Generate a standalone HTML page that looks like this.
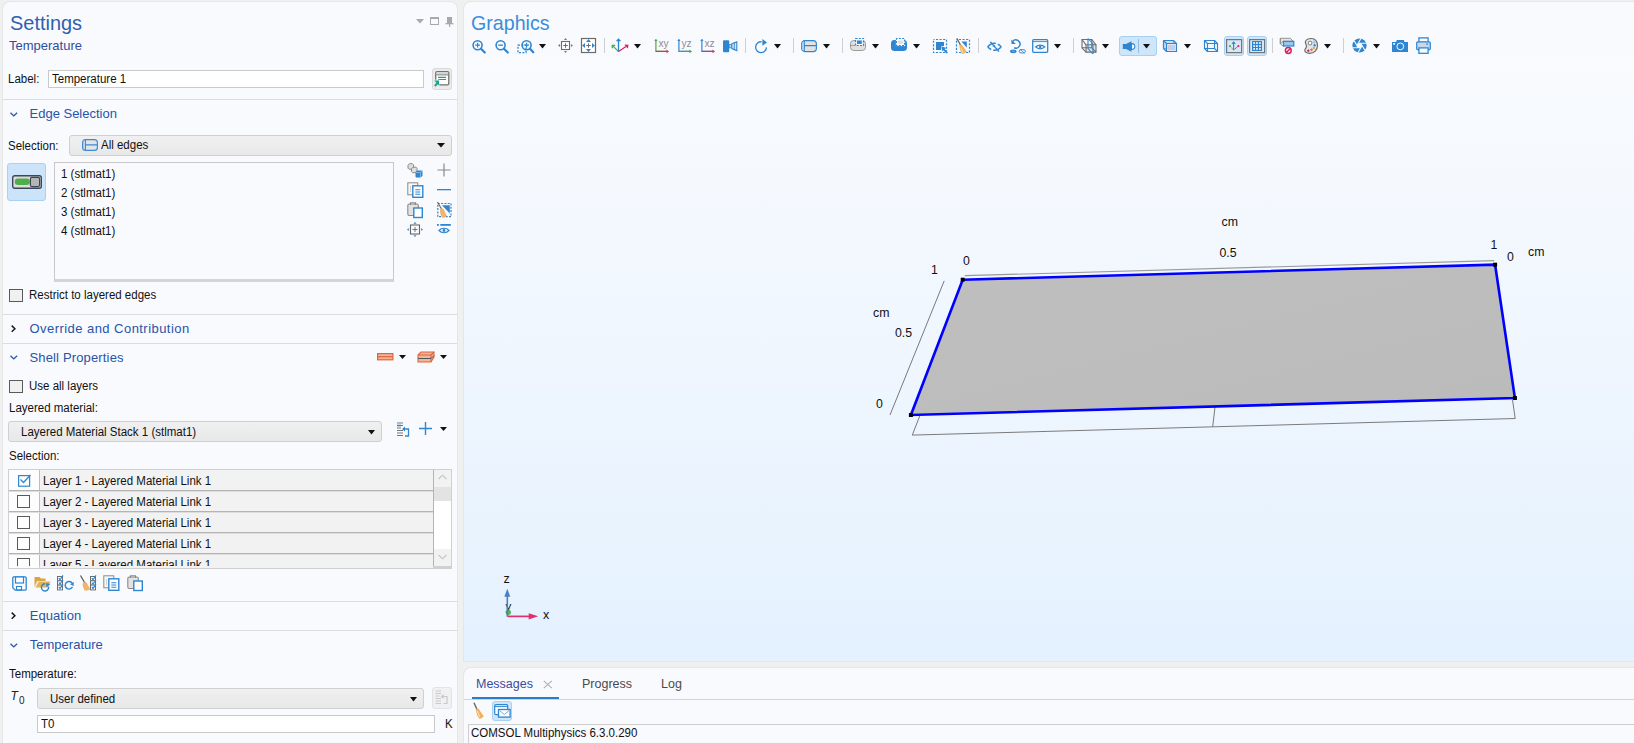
<!DOCTYPE html>
<html><head><meta charset="utf-8"><style>
*{margin:0;padding:0;box-sizing:border-box}
html,body{width:1634px;height:743px;overflow:hidden;background:#f0f0f0;font-family:"Liberation Sans",sans-serif;font-size:11.5px;color:#111;position:relative}
.a{position:absolute}
.t{position:absolute;white-space:nowrap;line-height:1}
svg.a{overflow:visible}
</style></head><body>
<div class="a" style="left:3px;top:2px;width:454px;height:760px;background:#f9fafe;border-radius:7px 7px 0 0;box-shadow:0 0 0 1px #e6e6e6"></div>
<div class="t" style="left:10.30px;top:12.12px;font-size:21px;color:#3160ae;transform:scaleX(0.95);transform-origin:0 0">Settings</div>
<div class="t" style="left:9.00px;top:38.90px;font-size:13px;color:#2d4f9c;">Temperature</div>
<svg class="a" style="left:416.2px;top:19px;" width="8" height="4.5" viewBox="0 0 8 4.5"><path d="M0 0H8L4.0 4.5Z" fill="#a9a9a9"/></svg>
<div class="a" style="left:430px;top:17px;width:9px;height:8px;border:1px solid #a9a9a9;border-top-width:2px"></div>
<svg class="a" style="left:445px;top:17px;" width="9" height="10" viewBox="0 0 9 10"><rect x="2" y="0" width="5" height="6" fill="#a9a9a9"/><rect x="0.5" y="6" width="8" height="1.3" fill="#a9a9a9"/><rect x="4" y="7" width="1.2" height="3" fill="#a9a9a9"/></svg>
<div class="t" style="left:8.00px;top:73.12px;font-size:12.5px;transform:scaleX(0.92);transform-origin:0 0;">Label:</div>
<div class="a" style="left:48px;top:70px;width:376px;height:18px;background:#fff;border:1px solid #cacaca"></div>
<div class="t" style="left:52.00px;top:73.12px;font-size:12.5px;transform:scaleX(0.92);transform-origin:0 0;">Temperature 1</div>
<div class="a" style="left:432px;top:68px;width:20px;height:22px;background:#ebebeb;border:1px solid #d9d9d9;border-radius:3px"></div>
<svg class="a" style="left:434px;top:70px;" width="16" height="17" viewBox="0 0 16 17"><rect x="1.7" y="1.7" width="13.1" height="13.1" rx="1.4" fill="#fff" stroke="#727272" stroke-width="1.3"/><rect x="2.4" y="2.4" width="11.7" height="2.2" fill="#d2d2d2"/><path d="M2.2 4.9H14.3" stroke="#727272" stroke-width="0.9"/><path d="M4 7.4H12M4 9.5H12" stroke="#1aa58a" stroke-width="1.1"/><rect x="-0.5" y="9.6" width="5.8" height="6.6" fill="#ececec"/><path d="M0.2 10.6H5V15.4Z" fill="#1aa58a"/><path d="M0.8 16L3.6 13" stroke="#1aa58a" stroke-width="2"/></svg>
<div class="a" style="left:3px;top:99px;width:454px;height:1px;background:#dcdcdc"></div>
<svg class="a" style="left:9.5px;top:112px;" width="8" height="5" viewBox="0 0 8 5"><path d="M0.5 0.7L3.8 3.9L7.1 0.7" fill="none" stroke="#2654a8" stroke-width="1.3"/></svg>
<div class="t" style="left:29.50px;top:106.90px;font-size:13px;color:#2654a8;">Edge Selection</div>
<div class="t" style="left:8.00px;top:139.52px;font-size:12.5px;transform:scaleX(0.92);transform-origin:0 0;">Selection:</div>
<div class="a" style="left:69px;top:135px;width:383px;height:21px;background:linear-gradient(#f0f0f0,#e8e8e8);border:1px solid #d0d0d0;border-radius:3px"></div>
<svg class="a" style="left:82px;top:139px;" width="16" height="12" viewBox="0 0 16 12"><rect x="0.6" y="0.6" width="14.8" height="10.8" rx="3" fill="#e4e4e4" stroke="#3a8ad6" stroke-width="1.15"/><path d="M1.8 1.5Q1.2 6 1.8 10.5" stroke="#9cc4ea" stroke-width="0.8" fill="none"/><path d="M3.4 1V11.2M3.4 5.9H15.2" stroke="#3a8ad6" stroke-width="1.1"/></svg>
<div class="t" style="left:101.00px;top:138.82px;font-size:12.5px;transform:scaleX(0.92);transform-origin:0 0;">All edges</div>
<svg class="a" style="left:437.0px;top:143px;" width="8" height="4.5" viewBox="0 0 8 4.5"><path d="M0 0H8L4.0 4.5Z" fill="#111"/></svg>
<div class="a" style="left:7px;top:163px;width:39px;height:38px;background:#cce4fa;border:1px solid #a9d1f5;border-radius:3px"></div>
<svg class="a" style="left:12px;top:175px;" width="30" height="14" viewBox="0 0 30 14"><rect x="0.7" y="0.7" width="28.6" height="12.6" rx="2" fill="#dcdcdc" stroke="#3b4756" stroke-width="1.4"/><rect x="2.8" y="3.6" width="15" height="6.4" rx="3.2" fill="#4fae4a"/><rect x="18.4" y="2.4" width="9.2" height="9.2" rx="1.5" fill="#b5b5b5" stroke="#3b4756" stroke-width="1.2"/></svg>
<div class="a" style="left:54px;top:162px;width:340px;height:120px;background:#f9fafe;border:1px solid #c8c8c8;border-bottom:3px solid #d5d5d7"></div>
<div class="t" style="left:61.30px;top:167.82px;font-size:12.5px;transform:scaleX(0.92);transform-origin:0 0;">1 (stlmat1)</div>
<div class="t" style="left:61.30px;top:186.82px;font-size:12.5px;transform:scaleX(0.92);transform-origin:0 0;">2 (stlmat1)</div>
<div class="t" style="left:61.30px;top:205.82px;font-size:12.5px;transform:scaleX(0.92);transform-origin:0 0;">3 (stlmat1)</div>
<div class="t" style="left:61.30px;top:224.82px;font-size:12.5px;transform:scaleX(0.92);transform-origin:0 0;">4 (stlmat1)</div>
<svg class="a" style="left:407px;top:163px;" width="16" height="15" viewBox="0 0 16 15"><g fill="#dedede" stroke="#8a8a8a" stroke-width="1"><path d="M1 2.2L2.5 0.7H5.5L6.5 1.7V4.7L5 6.2H2L1 5.2Z"/><path d="M4.5 5.7L6 4.2H9L10 5.2V8.2L8.5 9.7H5.5L4.5 8.7Z"/></g><path d="M8.5 9L10.5 7.5H15L15.5 8.5V13L13.5 14.5H9L8.5 13.5Z" fill="#2e86d2"/><path d="M9 9.5H13.5V14M13.5 9.5L15.5 7.5" fill="none" stroke="#8fc0ea" stroke-width="0.8"/></svg>
<svg class="a" style="left:437px;top:163px;" width="14" height="14" viewBox="0 0 14 14"><path d="M7 0.5V13.5M0.5 7H13.5" stroke="#8a8a8a" stroke-width="1.2"/></svg>
<svg class="a" style="left:406.5px;top:182px;" width="17" height="16" viewBox="0 0 17 16"><rect x="0.8" y="0.8" width="10" height="12" fill="#f7f7f7" stroke="#8a8a8a" stroke-width="1"/><path d="M3 5H4M3 7H4M3 9H4" stroke="#999" stroke-width="0.8"/><rect x="5.8" y="3.8" width="10" height="11.5" fill="#fff" stroke="#2e86d2" stroke-width="1.4"/><path d="M8.3 7.8H13.3M8.3 10H13.3M8.3 12.2H13.3" stroke="#2e86d2" stroke-width="1.1"/></svg>
<svg class="a" style="left:437px;top:189px;" width="14" height="2" viewBox="0 0 14 2"><rect x="0" y="0" width="14" height="1.3" fill="#2e86d2"/></svg>
<svg class="a" style="left:407px;top:202px;" width="16" height="16" viewBox="0 0 16 16"><rect x="0.8" y="2" width="10.5" height="11.5" rx="1.5" fill="#e2e2e2" stroke="#8a8a8a" stroke-width="1.1"/><path d="M3.5 3V0.8H8.5V3" fill="none" stroke="#8a8a8a" stroke-width="1.1"/><rect x="6.8" y="6" width="8.5" height="9.5" fill="#fff" stroke="#2e86d2" stroke-width="1.4"/></svg>
<svg class="a" style="left:437px;top:202px;" width="15" height="16" viewBox="0 0 15 16"><rect x="0.8" y="1.5" width="13.2" height="13.2" fill="none" stroke="#2e86d2" stroke-width="1.2" stroke-dasharray="2 1.3"/><path d="M5 3.2H12.8V11.5Z" fill="#2e86d2"/><path d="M0.5 0L4.5 7" stroke="#666" stroke-width="1.1"/><path d="M2.8 7.5Q5 5.8 6.5 7L10 14Q7 15.8 5 15.5Q2.8 11.5 2.8 7.5Z" fill="#f2b46a"/></svg>
<svg class="a" style="left:407px;top:222px;" width="16" height="15" viewBox="0 0 16 15"><rect x="3.5" y="3" width="9" height="9" fill="none" stroke="#666" stroke-width="1.1"/><path d="M8 5V10M5.5 7.5H10.5" stroke="#666" stroke-width="0.9"/><path d="M8 0L9.6 1.8H6.4Z M8 15L9.6 13.2H6.4Z M0 7.5L1.8 5.9V9.1Z M16 7.5L14.2 5.9V9.1Z" fill="#2e86d2"/></svg>
<svg class="a" style="left:437px;top:223px;" width="14" height="11" viewBox="0 0 14 11"><rect x="0" y="1" width="1.8" height="1.8" fill="#2e86d2"/><rect x="3.3" y="1" width="10.5" height="1.8" fill="#2e86d2"/><path d="M2 7.5C4.5 4.5 9.5 4.5 12 7.5C9.5 10.5 4.5 10.5 2 7.5Z" fill="none" stroke="#2e86d2" stroke-width="1.2"/><circle cx="7" cy="7.5" r="1.4" fill="#2e86d2"/></svg>
<div class="a" style="left:9px;top:289px;width:14px;height:13px;background:#f0f0f0;border:1px solid #5a5a5a"></div>
<div class="t" style="left:28.50px;top:289.02px;font-size:12.5px;transform:scaleX(0.92);transform-origin:0 0;">Restrict to layered edges</div>
<div class="a" style="left:3px;top:314px;width:454px;height:1px;background:#dcdcdc"></div>
<svg class="a" style="left:10.5px;top:325px;" width="5" height="8" viewBox="0 0 5 8"><path d="M0.7 0.6L3.9 3.7L0.7 6.8" fill="none" stroke="#1a1a1a" stroke-width="1.5"/></svg>
<div class="t" style="left:29.50px;top:322.00px;font-size:13px;color:#2654a8;letter-spacing:0.45px">Override and Contribution</div>
<div class="a" style="left:3px;top:343px;width:454px;height:1px;background:#dcdcdc"></div>
<svg class="a" style="left:9.5px;top:355px;" width="8" height="5" viewBox="0 0 8 5"><path d="M0.5 0.7L3.8 3.9L7.1 0.7" fill="none" stroke="#2654a8" stroke-width="1.3"/></svg>
<div class="t" style="left:29.50px;top:350.90px;font-size:13px;color:#2654a8;letter-spacing:0.15px">Shell Properties</div>
<svg class="a" style="left:377px;top:353px;" width="17" height="8" viewBox="0 0 17 8"><rect x="0.6" y="0.6" width="15.3" height="6.2" fill="#f0b59a" stroke="#e0643a" stroke-width="1.2"/><path d="M0.6 3.7H15.9" stroke="#e0643a" stroke-width="1.2"/></svg>
<svg class="a" style="left:399.1px;top:355px;" width="7" height="4" viewBox="0 0 7 4"><path d="M0 0H7L3.5 4Z" fill="#111"/></svg>
<svg class="a" style="left:417px;top:351px;" width="18" height="12" viewBox="0 0 18 12"><path d="M1 4L4 1H17V6L14 11H1Z" fill="#f0b59a" stroke="#e0643a" stroke-width="1.1"/><path d="M1 4H14V11M14 4L17 1" fill="none" stroke="#e0643a" stroke-width="1.1"/><path d="M1 7.5H14L17 4.5" fill="none" stroke="#555" stroke-width="1"/></svg>
<svg class="a" style="left:440.0px;top:355px;" width="7" height="4" viewBox="0 0 7 4"><path d="M0 0H7L3.5 4Z" fill="#111"/></svg>
<div class="a" style="left:9px;top:380px;width:14px;height:13px;background:#f0f0f0;border:1px solid #5a5a5a"></div>
<div class="t" style="left:28.50px;top:379.92px;font-size:12.5px;transform:scaleX(0.92);transform-origin:0 0;">Use all layers</div>
<div class="t" style="left:8.50px;top:402.02px;font-size:12.5px;transform:scaleX(0.92);transform-origin:0 0;">Layered material:</div>
<div class="a" style="left:8px;top:421px;width:374px;height:21px;background:linear-gradient(#f0f0f0,#e8e8e8);border:1px solid #d0d0d0;border-radius:3px"></div>
<div class="t" style="left:21.20px;top:425.62px;font-size:12.5px;transform:scaleX(0.92);transform-origin:0 0;">Layered Material Stack 1 (stlmat1)</div>
<svg class="a" style="left:367.9px;top:429.6px;" width="7" height="4.5" viewBox="0 0 7 4.5"><path d="M0 0H7L3.5 4.5Z" fill="#111"/></svg>
<svg class="a" style="left:397px;top:422px;" width="13" height="15" viewBox="0 0 13 15"><path d="M0 1H6M0 3.5H6M0 6H4M0 8.5H6M0 11H6M0 13.5H6" stroke="#777" stroke-width="1"/><path d="M0 3.5H4" stroke="#2f86d3" stroke-width="1.6"/><path d="M7 7H11.5V14H8" fill="none" stroke="#2f86d3" stroke-width="1.3"/><path d="M5 7L8 4.5V9.5Z" fill="#2f86d3"/></svg>
<svg class="a" style="left:419px;top:422px;" width="13" height="13" viewBox="0 0 13 13"><path d="M6.5 0V13M0 6.5H13" stroke="#2f86d3" stroke-width="1.4"/></svg>
<svg class="a" style="left:440.0px;top:427px;" width="7" height="4" viewBox="0 0 7 4"><path d="M0 0H7L3.5 4Z" fill="#111"/></svg>
<div class="t" style="left:8.50px;top:449.62px;font-size:12.5px;transform:scaleX(0.92);transform-origin:0 0;">Selection:</div>
<div class="a" style="left:8px;top:469px;width:444px;height:100px;background:#f9fafe;border:1px solid #d0d0d0;border-bottom:3px solid #d0d0d0"></div>
<div class="a" style="left:9px;top:470px;width:30px;height:21px;background:#fdfdfd"></div>
<div class="a" style="left:40px;top:470px;width:393px;height:21px;background:#f2f2f2"></div>
<div class="a" style="left:9px;top:491px;width:30px;height:21px;background:#fdfdfd"></div>
<div class="a" style="left:40px;top:491px;width:393px;height:21px;background:#f2f2f2"></div>
<div class="a" style="left:9px;top:512px;width:30px;height:21px;background:#fdfdfd"></div>
<div class="a" style="left:40px;top:512px;width:393px;height:21px;background:#f2f2f2"></div>
<div class="a" style="left:9px;top:533px;width:30px;height:21px;background:#fdfdfd"></div>
<div class="a" style="left:40px;top:533px;width:393px;height:21px;background:#f2f2f2"></div>
<div class="a" style="left:9px;top:554px;width:30px;height:14px;background:#fdfdfd"></div>
<div class="a" style="left:40px;top:554px;width:393px;height:14px;background:#f2f2f2"></div>
<div class="a" style="left:39px;top:470px;width:1px;height:96px;background:#bdbdbd"></div>
<div class="a" style="left:433px;top:470px;width:1px;height:96px;background:#b4b4b4"></div>
<div class="a" style="left:9px;top:490px;width:424px;height:1px;background:#b4b4b4"></div>
<div class="a" style="left:9px;top:491px;width:424px;height:1px;background:#dedede"></div>
<div class="a" style="left:9px;top:511px;width:424px;height:1px;background:#b4b4b4"></div>
<div class="a" style="left:9px;top:512px;width:424px;height:1px;background:#dedede"></div>
<div class="a" style="left:9px;top:532px;width:424px;height:1px;background:#b4b4b4"></div>
<div class="a" style="left:9px;top:533px;width:424px;height:1px;background:#dedede"></div>
<div class="a" style="left:9px;top:553px;width:424px;height:1px;background:#b4b4b4"></div>
<div class="a" style="left:9px;top:554px;width:424px;height:1px;background:#dedede"></div>
<div class="a" style="left:9px;top:470px;width:424px;height:96px;overflow:hidden">
<div class="t" style="left:34.3px;top:4.62px;font-size:12.5px;transform:scaleX(0.92);transform-origin:0 0">Layer 1 - Layered Material Link 1</div>
<div class="t" style="left:34.3px;top:25.62px;font-size:12.5px;transform:scaleX(0.92);transform-origin:0 0">Layer 2 - Layered Material Link 1</div>
<div class="t" style="left:34.3px;top:46.62px;font-size:12.5px;transform:scaleX(0.92);transform-origin:0 0">Layer 3 - Layered Material Link 1</div>
<div class="t" style="left:34.3px;top:67.62px;font-size:12.5px;transform:scaleX(0.92);transform-origin:0 0">Layer 4 - Layered Material Link 1</div>
<div class="t" style="left:34.3px;top:88.62px;font-size:12.5px;transform:scaleX(0.92);transform-origin:0 0">Layer 5 - Layered Material Link 1</div>
<svg class="a" style="left:7.5px;top:4px" width="15" height="13" viewBox="0 0 15 13"><rect x="1.6" y="1.6" width="11" height="10.6" fill="none" stroke="#2f86d3" stroke-width="1.2"/><path d="M3.5 5.5L6.5 8.5L13.5 1" fill="none" stroke="#2f86d3" stroke-width="1.3"/></svg>
<div class="a" style="left:8px;top:24.5px;width:13px;height:13px;border:1px solid #5a5a5a;background:#fdfdfd"></div>
<div class="a" style="left:8px;top:45.5px;width:13px;height:13px;border:1px solid #5a5a5a;background:#fdfdfd"></div>
<div class="a" style="left:8px;top:66.5px;width:13px;height:13px;border:1px solid #5a5a5a;background:#fdfdfd"></div>
<div class="a" style="left:8px;top:87.5px;width:13px;height:13px;border:1px solid #5a5a5a;background:#fdfdfd"></div>
</div>
<div class="a" style="left:434px;top:470px;width:17px;height:17px;background:#f2f2f2"></div>
<div class="a" style="left:434px;top:487px;width:17px;height:14px;background:#e3e3e3"></div>
<div class="a" style="left:434px;top:501px;width:17px;height:48px;background:#ffffff"></div>
<div class="a" style="left:434px;top:549px;width:17px;height:17px;background:#f2f2f2"></div>
<svg class="a" style="left:438px;top:474px;" width="9" height="6" viewBox="0 0 9 6"><path d="M0.6 5L4.5 1.2L8.4 5" fill="none" stroke="#c4c4c4" stroke-width="1.1"/></svg>
<svg class="a" style="left:438px;top:554px;" width="9" height="6" viewBox="0 0 9 6"><path d="M0.6 1L4.5 4.8L8.4 1" fill="none" stroke="#c4c4c4" stroke-width="1.1"/></svg>
<svg class="a" style="left:11.5px;top:575.5px;" width="15" height="15" viewBox="0 0 15 15"><path d="M1 0.8H13.2Q14.2 0.8 14.2 1.8V13.2Q14.2 14.2 13.2 14.2H3.2L0.8 11.8V1.8Q0.8 0.8 1.8 0.8Z" fill="none" stroke="#2e86d2" stroke-width="1.3"/><rect x="3.5" y="1" width="8" height="6" fill="#fff" stroke="#2e86d2" stroke-width="1.2"/><rect x="4.5" y="10.5" width="5" height="3.5" fill="none" stroke="#2e86d2" stroke-width="1.1"/></svg>
<svg class="a" style="left:33.5px;top:575.5px;" width="17" height="16" viewBox="0 0 17 16"><path d="M0.5 1H5.5L7 2.5H11.5V5H3L0.5 11Z" fill="#d9a545"/><path d="M0.5 11.5L3.5 5.5H16.5L13.5 11.5Z" fill="#e1b457"/><path d="M1 11.5L4 6" stroke="#fff" stroke-width="0.8"/><path d="M14.5 10.5A3.6 3.6 0 1 1 11 7.8" fill="none" stroke="#2e86d2" stroke-width="1.4"/><path d="M16.5 8L12.5 11.2L12.2 7Z" fill="#2e86d2"/></svg>
<svg class="a" style="left:56.5px;top:575px;" width="17" height="16" viewBox="0 0 17 16"><g fill="#fff" stroke="#6e6e6e" stroke-width="1"><rect x="0.5" y="1.5" width="5" height="4.3"/><rect x="0.5" y="5.8" width="5" height="4.3"/><rect x="0.5" y="10.1" width="5" height="4.8"/></g><path d="M1.8 3.2L3 4.8L6 0.3M1.8 7.5L3 9.1L6 5M1.8 11.8L3 13.4L6 9.3" fill="none" stroke="#2e86d2" stroke-width="1.2"/><path d="M15.5 11.8A3.8 3.8 0 1 1 15.2 8.2" fill="none" stroke="#2e86d2" stroke-width="1.4"/><path d="M16.8 7L16.6 11L13 9.2Z" fill="#2e86d2"/></svg>
<svg class="a" style="left:80px;top:575px;" width="17" height="16" viewBox="0 0 17 16"><path d="M0.5 0.5L4.8 8" stroke="#555" stroke-width="1.2"/><path d="M2.5 8.5Q5 6 6.5 7.5L10.5 14.5Q7 16 4.5 15.5Q2.5 12 2.5 8.5Z" fill="#f2b46a"/><g fill="#fff" stroke="#6e6e6e" stroke-width="1"><rect x="10.5" y="1.5" width="5" height="4.3"/><rect x="10.5" y="5.8" width="5" height="4.3"/><rect x="10.5" y="10.1" width="5" height="4.8"/></g><path d="M11.8 3.2L13 4.8L16 0.3M11.8 7.5L13 9.1L16 5M11.8 11.8L13 13.4L16 9.3" fill="none" stroke="#2e86d2" stroke-width="1.2"/></svg>
<svg class="a" style="left:103px;top:575px;" width="17" height="16" viewBox="0 0 17 16"><rect x="0.8" y="0.8" width="10" height="12" fill="#f7f7f7" stroke="#8a8a8a" stroke-width="1"/><path d="M3 5H4M3 7H4M3 9H4" stroke="#999" stroke-width="0.8"/><rect x="5.8" y="3.8" width="10" height="11.5" fill="#fff" stroke="#2e86d2" stroke-width="1.4"/><path d="M8.3 7.8H13.3M8.3 10H13.3M8.3 12.2H13.3" stroke="#2e86d2" stroke-width="1.1"/></svg>
<svg class="a" style="left:126.5px;top:575px;" width="16" height="16" viewBox="0 0 16 16"><rect x="0.8" y="2" width="10.5" height="11.5" rx="1.5" fill="#e2e2e2" stroke="#8a8a8a" stroke-width="1.1"/><path d="M3.5 3V0.8H8.5V3" fill="none" stroke="#8a8a8a" stroke-width="1.1"/><rect x="6.8" y="6" width="8.5" height="9.5" fill="#fff" stroke="#2e86d2" stroke-width="1.4"/></svg>
<div class="a" style="left:3px;top:601px;width:454px;height:1px;background:#dcdcdc"></div>
<svg class="a" style="left:10.5px;top:612.2px;" width="5" height="8" viewBox="0 0 5 8"><path d="M0.7 0.6L3.9 3.7L0.7 6.8" fill="none" stroke="#1a1a1a" stroke-width="1.5"/></svg>
<div class="t" style="left:29.80px;top:608.80px;font-size:13px;color:#2654a8;">Equation</div>
<div class="a" style="left:3px;top:630px;width:454px;height:1px;background:#dcdcdc"></div>
<svg class="a" style="left:9.5px;top:642.5px;" width="8" height="5" viewBox="0 0 8 5"><path d="M0.5 0.7L3.8 3.9L7.1 0.7" fill="none" stroke="#2654a8" stroke-width="1.3"/></svg>
<div class="t" style="left:29.80px;top:637.90px;font-size:13px;color:#2654a8;">Temperature</div>
<div class="t" style="left:9.00px;top:668.12px;font-size:12.5px;transform:scaleX(0.92);transform-origin:0 0;">Temperature:</div>
<div class="t" style="left:10.50px;top:689.94px;font-size:12px;color:#222;font-style:italic">T</div>
<div class="t" style="left:19.00px;top:695.74px;font-size:10px;color:#222;">0</div>
<div class="a" style="left:37px;top:688px;width:387px;height:21px;background:linear-gradient(#f0f0f0,#e8e8e8);border:1px solid #d0d0d0;border-radius:3px"></div>
<div class="t" style="left:50.20px;top:692.82px;font-size:12.5px;transform:scaleX(0.92);transform-origin:0 0;">User defined</div>
<svg class="a" style="left:410.0px;top:696.6px;" width="7" height="4.5" viewBox="0 0 7 4.5"><path d="M0 0H7L3.5 4.5Z" fill="#111"/></svg>
<div class="a" style="left:432px;top:687px;width:20px;height:22px;background:#f1f1f3;border:1px solid #e3e3e6;border-radius:3px"></div>
<svg class="a" style="left:435px;top:690px;" width="14" height="15" viewBox="0 0 14 15"><path d="M0.5 1H6M0.5 3.5H6M0.5 6H4.5M0.5 8.5H6M0.5 11H6M0.5 13.5H6" stroke="#c8c8c8" stroke-width="1"/><path d="M7.5 6.5H12V13.5H8.5" fill="none" stroke="#c8c8c8" stroke-width="1.2"/><path d="M5.5 6.5L8.5 4V9Z" fill="#c8c8c8"/></svg>
<div class="a" style="left:37px;top:715px;width:398px;height:18px;background:#fff;border:1px solid #c9c9c9"></div>
<div class="t" style="left:41.00px;top:717.52px;font-size:12.5px;transform:scaleX(0.92);transform-origin:0 0;">T0</div>
<div class="t" style="left:445.00px;top:718.02px;font-size:12.5px;transform:scaleX(0.92);transform-origin:0 0;">K</div>
<div class="a" style="left:464px;top:2px;width:1175px;height:659px;background:#f9fafe;border-radius:7px 0 0 0;box-shadow:0 0 0 1px #e6e6e6"></div>
<div class="a" style="left:464px;top:58px;width:1175px;height:603px;background:linear-gradient(#f9fbfe 0%,#eff6fe 50%,#e4f1fe 100%)"></div>
<div class="a" style="left:464px;top:668px;width:1175px;height:80px;background:#f9fafe;border-radius:7px 0 0 0;box-shadow:0 0 0 1px #e6e6e6"></div>
<div class="t" style="left:471.30px;top:12.02px;font-size:21px;color:#3a8ed9;transform:scaleX(0.935);transform-origin:0 0">Graphics</div>
<svg class="a" style="left:471.5px;top:39.5px;" width="15" height="14" viewBox="0 0 15 14"><circle cx="5.6" cy="5.2" r="4.5" fill="none" stroke="#2e86d2" stroke-width="1.6"/><path d="M9 8.7L12.8 12.5" stroke="#2e86d2" stroke-width="2.2" stroke-linecap="round"/><path d="M5.6 2.8V7.6M3.2 5.2H8" stroke="#2e86d2" stroke-width="1.2"/></svg>
<svg class="a" style="left:494.7px;top:39.5px;" width="15" height="14" viewBox="0 0 15 14"><circle cx="5.6" cy="5.2" r="4.5" fill="none" stroke="#2e86d2" stroke-width="1.6"/><path d="M9 8.7L12.8 12.5" stroke="#2e86d2" stroke-width="2.2" stroke-linecap="round"/><path d="M3.2 5.2H8" stroke="#2e86d2" stroke-width="1.3"/></svg>
<svg class="a" style="left:516.5px;top:39.5px;" width="17" height="14" viewBox="0 0 17 14"><rect x="1" y="5.2" width="8" height="7.4" fill="none" stroke="#2e86d2" stroke-width="1.3" stroke-dasharray="2 1.4"/><circle cx="9.6" cy="5.2" r="4.5" fill="none" stroke="#2e86d2" stroke-width="1.6"/><path d="M9.6 2.8V7.6M7.2 5.2H12" stroke="#2e86d2" stroke-width="1.2"/><path d="M13 8.7L16.3 12.3" stroke="#2e86d2" stroke-width="2.2" stroke-linecap="round"/></svg>
<svg class="a" style="left:539.1px;top:44px;" width="7" height="4.5" viewBox="0 0 7 4.5"><path d="M0 0H7L3.5 4.5Z" fill="#111"/></svg>
<svg class="a" style="left:558px;top:38px;" width="16" height="15" viewBox="0 0 16 15"><rect x="3.5" y="3.5" width="8" height="8" fill="#fff" stroke="#6b6b6b" stroke-width="1.1"/><path d="M7.5 5.2V9.8M5.2 7.5H9.8" stroke="#6b6b6b" stroke-width="1"/><path d="M6 2H9L7.5 0Z M6 13H9L7.5 15Z M2.1 6V9L0 7.5Z M12.9 6V9L15 7.5Z" fill="#2e86d2"/></svg>
<svg class="a" style="left:581px;top:38px;" width="15" height="15" viewBox="0 0 15 15"><rect x="0.5" y="0.5" width="14" height="14" fill="#fff" stroke="#6b6b6b" stroke-width="1.2"/><path d="M7.5 5.3V9.7M5.3 7.5H9.7" stroke="#6b6b6b" stroke-width="1"/><path d="M5 4H10L7.5 1.1Z M5 11H10L7.5 13.9Z M4 5V10L1.1 7.5Z M11 5V10L13.9 7.5Z" fill="#2e86d2"/></svg>
<div class="a" style="left:604px;top:38px;width:1px;height:15px;background:#cfcfcf"></div>
<svg class="a" style="left:611px;top:38px;" width="18" height="15" viewBox="0 0 18 15"><path d="M7.5 1.5V13.6" stroke="#2e86d2" stroke-width="1.3"/><path d="M5.6 3.2L7.5 1.2L9.4 3.2" fill="none" stroke="#2e86d2" stroke-width="1.3"/><path d="M7.5 13.6L1.6 7.6" stroke="#4aa84a" stroke-width="1.2"/><path d="M1.3 10.2V7.3H4.2" fill="none" stroke="#4aa84a" stroke-width="1.3"/><path d="M7.5 13.6L16.5 7.6" stroke="#e01e5a" stroke-width="1.2"/><path d="M13.8 7.2L16.8 7.4L16.3 10.2" fill="none" stroke="#e01e5a" stroke-width="1.3"/></svg>
<svg class="a" style="left:634.0px;top:44px;" width="7" height="4.5" viewBox="0 0 7 4.5"><path d="M0 0H7L3.5 4.5Z" fill="#111"/></svg>
<svg class="a" style="left:653.5px;top:38px;" width="16" height="15" viewBox="0 0 16 15"><path d="M1.9 1.5V13.4H13" fill="none" stroke="#4aa84a" stroke-width="1.2"/><path d="M1.9 13.4H13" stroke="#e03060" stroke-width="1.2"/><path d="M0.2 3L1.9 0.9L3.6 3Z" fill="#4aa84a"/><path d="M15 13.4L12.5 11.5V15.3Z" fill="#e03060"/><text x="4.4" y="8.8" font-family="Liberation Sans" font-size="10.2" fill="#8c8c98">xy</text></svg>
<svg class="a" style="left:676.5px;top:38px;" width="16" height="15" viewBox="0 0 16 15"><path d="M1.9 1.5V13.4H13" fill="none" stroke="#2e86d2" stroke-width="1.2"/><path d="M1.9 13.4H13" stroke="#4aa84a" stroke-width="1.2"/><path d="M0.2 3L1.9 0.9L3.6 3Z" fill="#2e86d2"/><path d="M15 13.4L12.5 11.5V15.3Z" fill="#4aa84a"/><text x="4.4" y="8.8" font-family="Liberation Sans" font-size="10.2" fill="#8c8c98">yz</text></svg>
<svg class="a" style="left:699.7px;top:38px;" width="16" height="15" viewBox="0 0 16 15"><path d="M1.9 1.5V13.4H13" fill="none" stroke="#2e86d2" stroke-width="1.2"/><path d="M1.9 13.4H13" stroke="#e03060" stroke-width="1.2"/><path d="M0.2 3L1.9 0.9L3.6 3Z" fill="#2e86d2"/><path d="M15 13.4L12.5 11.5V15.3Z" fill="#e03060"/><text x="4.4" y="8.8" font-family="Liberation Sans" font-size="10.2" fill="#8c8c98">xz</text></svg>
<svg class="a" style="left:723px;top:40px;" width="15" height="12.5" viewBox="0 0 15 12.5"><rect x="0" y="0.2" width="6.2" height="12" rx="1" fill="#2e86d2"/><rect x="6.2" y="4.6" width="2.6" height="3.2" fill="#bcd8f0" stroke="#2e86d2" stroke-width="0.8"/><path d="M8.8 3.8L13.8 1.9V10.6L8.8 8.6Z" fill="#d9e8f6" stroke="#2e86d2" stroke-width="1.1"/><path d="M11.3 2.9V9.6" stroke="#2e86d2" stroke-width="0.9"/></svg>
<div class="a" style="left:745px;top:38px;width:1px;height:15px;background:#cfcfcf"></div>
<svg class="a" style="left:754px;top:38px;" width="15" height="16" viewBox="0 0 15 16"><path d="M12.45 9.4A5.4 5.4 0 1 1 7.6 3.8" fill="none" stroke="#2e86d2" stroke-width="1.3"/><path d="M8.4 1L13 4.5L8.4 7.8Z" fill="#2e86d2"/></svg>
<svg class="a" style="left:774.0px;top:44px;" width="7" height="4.5" viewBox="0 0 7 4.5"><path d="M0 0H7L3.5 4.5Z" fill="#111"/></svg>
<div class="a" style="left:793px;top:38px;width:1px;height:15px;background:#cfcfcf"></div>
<svg class="a" style="left:801px;top:40px;" width="16" height="13" viewBox="0 0 16 13"><rect x="0.6" y="0.6" width="14.8" height="11" rx="3.3" fill="#e2e2e2" stroke="#2e86d2" stroke-width="1.15"/><path d="M1.6 2Q0.9 6 1.6 10.2" stroke="#a9c9ea" stroke-width="0.9" fill="none"/><path d="M3.3 0.8V11.4M3.3 5.6H15.2" stroke="#2e86d2" stroke-width="1.1"/></svg>
<svg class="a" style="left:823.0px;top:44px;" width="7" height="4.5" viewBox="0 0 7 4.5"><path d="M0 0H7L3.5 4.5Z" fill="#111"/></svg>
<div class="a" style="left:842px;top:38px;width:1px;height:15px;background:#cfcfcf"></div>
<svg class="a" style="left:849px;top:38px;" width="18" height="14" viewBox="0 0 18 14"><rect x="1.5" y="2.5" width="15" height="10" rx="3.2" fill="#e0e0e0" stroke="#9a9a9a" stroke-width="1"/><path d="M1.5 7.5H6" stroke="#9a9a9a" stroke-width="0.9"/><rect x="6.5" y="0.5" width="8" height="7" fill="#f6f6f6" stroke="#2e86d2" stroke-width="1.2" stroke-dasharray="2 1.3"/><rect x="8" y="2.5" width="4.8" height="3.4" fill="#2e86d2"/></svg>
<svg class="a" style="left:871.8px;top:44px;" width="7" height="4.5" viewBox="0 0 7 4.5"><path d="M0 0H7L3.5 4.5Z" fill="#111"/></svg>
<svg class="a" style="left:890px;top:38px;" width="18" height="14" viewBox="0 0 18 14"><rect x="1" y="2" width="16" height="11" rx="3.4" fill="#2e86d2"/><rect x="6.5" y="0.5" width="8" height="7" fill="#fff" stroke="#fff" stroke-width="1.2"/><rect x="6.5" y="0.5" width="8" height="7" fill="none" stroke="#2e86d2" stroke-width="1.2" stroke-dasharray="2 1.3" stroke-dashoffset="1"/><rect x="8" y="2.5" width="4.8" height="3.4" fill="#dedede"/></svg>
<svg class="a" style="left:912.8px;top:44px;" width="7" height="4.5" viewBox="0 0 7 4.5"><path d="M0 0H7L3.5 4.5Z" fill="#111"/></svg>
<svg class="a" style="left:933px;top:39px;" width="16" height="16" viewBox="0 0 16 16"><rect x="0.5" y="0.5" width="13" height="13" fill="none" stroke="#2e86d2" stroke-width="1.2" stroke-dasharray="2.1 1.45" stroke-dashoffset="1.05"/><path d="M3 3H11V7L8 7L8 11H3Z" fill="#2e86d2"/><path d="M8.2 7.2L13.4 8.9L11.6 10L14.9 13.4L13.6 14.6L10.3 11.3L9.4 12.6Z" fill="#2e86d2"/></svg>
<svg class="a" style="left:956px;top:38px;" width="16" height="17" viewBox="0 0 16 17"><rect x="0.5" y="1.5" width="13" height="13" fill="none" stroke="#2e86d2" stroke-width="1.2" stroke-dasharray="2.1 1.45" stroke-dashoffset="1.05"/><path d="M5.5 3.5H10.8V9.8Z" fill="#2e86d2"/><path d="M0.8 0.4L4.6 7.2" stroke="#666" stroke-width="1.3"/><path d="M3.3 7.3Q5 6 6.3 7.2L10.8 13.8Q8.5 15.8 6 16.2Q3.5 12 3.3 7.3Z" fill="#f3b25a"/><path d="M4.8 9.5Q6 12 7 15" stroke="#fbd79a" stroke-width="1.2" fill="none"/></svg>
<div class="a" style="left:978px;top:38px;width:1px;height:15px;background:#cfcfcf"></div>
<svg class="a" style="left:986.5px;top:40.5px;" width="15" height="11" viewBox="0 0 15 11"><path d="M4.2 8.5Q2 7.5 0.9 5.8Q4 1.8 8.8 2.4M10.8 3.1Q13 4.2 14.1 5.8Q11 9.8 6.2 9.2" fill="none" stroke="#2e86d2" stroke-width="1.4"/><path d="M3.3 0.8L12 10.6" stroke="#2e86d2" stroke-width="1.4"/><path d="M5.8 6Q6.5 4.2 8.2 4.1" fill="none" stroke="#2e86d2" stroke-width="0.8"/></svg>
<svg class="a" style="left:1008.5px;top:37.5px;" width="17" height="16" viewBox="0 0 17 16"><path d="M3.6 3.6A4.1 4.1 0 1 1 5.2 9.8" fill="none" stroke="#2e86d2" stroke-width="1.5"/><path d="M2.2 1.6L2.6 6H6.8Z" fill="#2e86d2"/><ellipse cx="4.3" cy="13.3" rx="3.3" ry="1.9" fill="#2e86d2"/><path d="M3.2 13.3H5.4" stroke="#bcd8f0" stroke-width="0.6"/><ellipse cx="13.3" cy="13.3" rx="3.2" ry="1.8" fill="none" stroke="#2e86d2" stroke-width="1"/><path d="M11.3 11.3L15.5 15.3" stroke="#2e86d2" stroke-width="0.9"/></svg>
<svg class="a" style="left:1031.5px;top:38.5px;" width="17" height="14" viewBox="0 0 17 14"><rect x="0.7" y="0.7" width="15" height="12.6" rx="1" fill="none" stroke="#2e86d2" stroke-width="1.3"/><path d="M1 2.6H15.5" stroke="#2e86d2" stroke-width="0.9"/><path d="M3.6 7.9C6.2 5.4 10.2 5.4 12.8 7.9C10.2 10.4 6.2 10.4 3.6 7.9Z" fill="none" stroke="#2e86d2" stroke-width="1.3"/><circle cx="8.2" cy="7.9" r="1.2" fill="#2e86d2"/></svg>
<svg class="a" style="left:1053.9px;top:44px;" width="7" height="4.5" viewBox="0 0 7 4.5"><path d="M0 0H7L3.5 4.5Z" fill="#111"/></svg>
<div class="a" style="left:1073px;top:38px;width:1px;height:15px;background:#cfcfcf"></div>
<svg class="a" style="left:1080.5px;top:37.5px;" width="17" height="17" viewBox="0 0 17 17"><path d="M5 6.8H15V14H5Z" fill="#e2e2e2"/><g fill="none" stroke="#6e6e6e" stroke-width="1.1"><path d="M1 1.5H10.8V9.8H1Z"/><path d="M5 6.8H15V14.1H5Z"/><path d="M1 1.5L5 6.8M10.8 1.5L15 6.8M10.8 9.8L15 14.1M1 9.8L5 14.1"/></g><path d="M7 0.5V10.5L12 16M7 0.5L12 6V16" fill="none" stroke="#2e86d2" stroke-width="1.1"/></svg>
<svg class="a" style="left:1102.1px;top:44px;" width="7" height="4.5" viewBox="0 0 7 4.5"><path d="M0 0H7L3.5 4.5Z" fill="#111"/></svg>
<div class="a" style="left:1119px;top:36px;width:38px;height:20px;background:#cfe5f9;border:1px solid #a6d0f4;border-radius:3px"></div>
<div class="a" style="left:1138px;top:39px;width:1px;height:14px;background:#8fbde6"></div>
<svg class="a" style="left:1121.9px;top:40.5px;" width="14" height="11" viewBox="0 0 14 11"><path d="M0.8 3H4L9.5 0.2V10.8L4 8H0.8Z" fill="#2e86d2"/><path d="M9.5 2.6Q12.8 2.6 12.8 5.5Q12.8 8.4 9.5 8.4Z" fill="#fff" stroke="#2e86d2" stroke-width="1.1"/></svg>
<svg class="a" style="left:1143.0px;top:44px;" width="7" height="4.5" viewBox="0 0 7 4.5"><path d="M0 0H7L3.5 4.5Z" fill="#111"/></svg>
<svg class="a" style="left:1163px;top:40px;" width="15" height="13" viewBox="0 0 15 13"><path d="M0.5 0.5H10.5L13.5 3.5H3.5V11.5L0.5 8.5Z" fill="#d3dcf0"/><rect x="3.5" y="3.5" width="10" height="8" fill="#e2e7f3"/><rect x="5" y="5" width="7" height="5" fill="#c3d0ea"/><g fill="none" stroke="#2e86d2" stroke-width="1.15"><path d="M0.5 0.5H10.5V3.5M0.5 0.5V8.5H3.5" stroke-opacity="0.6"/><path d="M3.5 3.5H13.5V11.5H3.5Z"/><path d="M0.5 0.5L3.5 3.5M10.5 0.5L13.5 3.5M0.5 8.5L3.5 11.5"/><path d="M0.5 0.5V8.5M0.5 0.5H10.5"/></g></svg>
<svg class="a" style="left:1184.1px;top:44px;" width="7" height="4.5" viewBox="0 0 7 4.5"><path d="M0 0H7L3.5 4.5Z" fill="#111"/></svg>
<svg class="a" style="left:1204px;top:40px;" width="15" height="13" viewBox="0 0 15 13"><g fill="none" stroke="#2e86d2" stroke-width="1.15"><path d="M0.5 0.5H10.5V8.5H0.5Z"/><path d="M3.5 3.5H13.5V11.5H3.5Z"/><path d="M0.5 0.5L3.5 3.5M10.5 0.5L13.5 3.5M0.5 8.5L3.5 11.5M10.5 8.5L13.5 11.5"/></g></svg>
<div class="a" style="left:1224px;top:36px;width:20px;height:20px;background:#cfe5f9;border:1px solid #a6d0f4;border-radius:3px"></div>
<svg class="a" style="left:1226px;top:39px;" width="16" height="14" viewBox="0 0 16 14"><rect x="0.6" y="0.6" width="15" height="13" fill="#d6e8f7" stroke="#757575" stroke-width="1.2"/><path d="M7.6 3.5V11" stroke="#2e86d2" stroke-width="1.1"/><path d="M6 4.8L7.6 3L9.2 4.8" fill="none" stroke="#2e86d2" stroke-width="1.1"/><path d="M7.6 11L4 7.2" stroke="#4aa84a" stroke-width="1" stroke-dasharray="1.2 0.6"/><rect x="3" y="6.2" width="1.8" height="1.8" fill="#4aa84a"/><path d="M7.6 11L12 7.3" stroke="#e01e5a" stroke-width="1" stroke-dasharray="1.2 0.6"/><rect x="11.5" y="6.2" width="1.8" height="1.8" fill="#e01e5a"/></svg>
<div class="a" style="left:1247px;top:36px;width:20px;height:20px;background:#cfe5f9;border:1px solid #a6d0f4;border-radius:3px"></div>
<svg class="a" style="left:1249px;top:39px;" width="16" height="14" viewBox="0 0 16 14"><rect x="0.6" y="0.6" width="15" height="13" fill="#d6e8f7" stroke="#757575" stroke-width="1.2"/><rect x="3" y="2.1" width="10" height="9.8" rx="0.5" fill="#2e86d2"/><g fill="#fff"><rect x="4.3" y="3.2" width="1.7" height="1.7"/><rect x="7.1" y="3.2" width="1.7" height="1.7"/><rect x="10.1" y="3.2" width="1.7" height="1.7"/><rect x="4.3" y="6.2" width="1.7" height="1.7"/><rect x="7.1" y="6.2" width="1.7" height="1.7"/><rect x="10.1" y="6.2" width="1.7" height="1.7"/><rect x="4.3" y="9.1" width="1.7" height="1.7"/><rect x="7.1" y="9.1" width="1.7" height="1.7"/><rect x="10.1" y="9.1" width="1.7" height="1.7"/></g></svg>
<div class="a" style="left:1272px;top:38px;width:1px;height:15px;background:#cfcfcf"></div>
<svg class="a" style="left:1279px;top:37px;" width="17" height="18" viewBox="0 0 17 18"><path d="M1.3 1.3H11.2L14.3 4.3H4.4L1.3 6.8Z" fill="#ece6de" stroke="#8a8a8a" stroke-width="0.9"/><path d="M1.3 1.3V6.8L4.4 9.3" fill="none" stroke="#8a8a8a" stroke-width="0.9"/><rect x="4.4" y="4.4" width="10.4" height="4.6" fill="#95c7ef" stroke="#2e86d2" stroke-width="1.2"/><circle cx="9.3" cy="13.5" r="2.9" fill="none" stroke="#e01e5a" stroke-width="1.5"/><path d="M7.3 15.5L11.3 11.5" stroke="#e01e5a" stroke-width="1.4"/></svg>
<svg class="a" style="left:1303px;top:37px;" width="17" height="18" viewBox="0 0 17 18"><path d="M8.5 1.5C12.5 1.5 14.5 5 14.5 8.5C14.5 13 11.5 16.3 6.5 16.3C3.2 16.3 1.5 14.8 1.8 13C2.1 11.3 3.8 10.8 3.5 8.8C3.2 7.2 2.2 6.5 2.4 4.8C2.8 2.6 5.5 1.5 8.5 1.5Z" fill="#e4e4e4" stroke="#6e6e6e" stroke-width="1.2"/><rect x="5.4" y="4.4" width="3.4" height="3.4" rx="1.2" fill="#fff" stroke="#6e6e6e" stroke-width="1"/><circle cx="11.4" cy="5" r="1.4" fill="#9ccbf0"/><path d="M11.6 6.8L13.1 8.3L11.6 9.8L10.1 8.3Z" fill="#2e86d2"/><path d="M10.8 9.6L12.3 11.1L10.8 12.6L9.3 11.1Z" fill="#f0a030"/><path d="M8.5 11.2L10 12.7L8.5 14.2L7 12.7Z" fill="#f06a2a"/><path d="M5.3 12.3L6.8 13.8L5.3 15.3L3.8 13.8Z" fill="#e0205a"/></svg>
<svg class="a" style="left:1324.0px;top:44px;" width="7" height="4.5" viewBox="0 0 7 4.5"><path d="M0 0H7L3.5 4.5Z" fill="#111"/></svg>
<div class="a" style="left:1343px;top:38px;width:1px;height:15px;background:#cfcfcf"></div>
<svg class="a" style="left:1351.5px;top:38.3px;" width="15" height="15" viewBox="0 0 15 15"><circle cx="7.5" cy="7.5" r="7.1" fill="#2e86d2"/><path d="M10.10 7.50L8.80 9.75L6.20 9.75L4.90 7.50L6.20 5.25L8.80 5.25Z" fill="#f9fafe"/><path d="M10.10 7.50L6.08 14.46 M8.80 9.75L0.77 9.75 M6.20 9.75L2.18 2.79 M4.90 7.50L8.92 0.54 M6.20 5.25L14.23 5.25 M8.80 5.25L12.82 12.21" stroke="#f9fafe" stroke-width="1.1"/></svg>
<svg class="a" style="left:1373.0px;top:44px;" width="7" height="4.5" viewBox="0 0 7 4.5"><path d="M0 0H7L3.5 4.5Z" fill="#111"/></svg>
<svg class="a" style="left:1392px;top:40px;" width="16" height="12" viewBox="0 0 16 12"><path d="M0 2H4.2L4.6 0.3Q4.7 0 5 0H11.6Q11.9 0 12 0.3L12.4 2H16V12H0Z" fill="#2e86d2"/><circle cx="8.3" cy="6.4" r="3.4" fill="none" stroke="#f9fafe" stroke-width="1"/><rect x="1.2" y="3" width="1.8" height="1.7" fill="#f9fafe"/></svg>
<svg class="a" style="left:1415.5px;top:37px;" width="15" height="17" viewBox="0 0 15 17"><rect x="2.9" y="0.9" width="9.2" height="4.6" fill="#fff" stroke="#2e86d2" stroke-width="1.3"/><path d="M1.8 4.8H13.2Q14.3 4.8 14.3 6V11.8Q14.3 12.6 13.5 12.6H1.5Q0.7 12.6 0.7 11.8V6Q0.7 4.8 1.8 4.8Z" fill="#c5d8ee" stroke="#2e86d2" stroke-width="1.2"/><rect x="2.9" y="10.9" width="9.2" height="5.4" fill="#fff" stroke="#2e86d2" stroke-width="1.3"/><rect x="10" y="6.6" width="2.2" height="1" fill="#2e86d2"/></svg>
<svg class="a" style="left:0;top:0" width="1634" height="743" viewBox="0 0 1634 743"><path d="M944.2 280.9L890 415" stroke="#7a7a7a" stroke-width="1" fill="none"/><path d="M964.8 275.7L1494.2 260.6" stroke="#9a9a9a" stroke-width="1.2" fill="none"/><path d="M919.8 415.8L912.3 435.1L1515.2 418.5L1512.5 399.7" stroke="#7a7a7a" stroke-width="1" fill="none"/><path d="M1215 406.9L1212.7 427" stroke="#7a7a7a" stroke-width="1" fill="none"/><defs><linearGradient id="pg" x1="0" y1="0" x2="1" y2="1"><stop offset="0" stop-color="#bfbfbf"/><stop offset="1" stop-color="#bbbbbb"/></linearGradient></defs><path d="M962.7 279.7L1495.1 264.7L1514.9 398L910.9 415Z" fill="url(#pg)" stroke="#0000ff" stroke-width="2.6" stroke-linejoin="miter"/><rect x="960.7" y="277.7" width="4" height="4" fill="#000"/><rect x="1493.1" y="262.7" width="4" height="4" fill="#000"/><rect x="1512.9" y="396" width="4" height="4" fill="#000"/><rect x="908.9" y="413" width="4" height="4" fill="#000"/></svg>
<div class="t" style="left:1221.50px;top:216.49px;font-size:12.3px;color:#111111;">cm</div>
<div class="t" style="left:1219.50px;top:246.99px;font-size:12.3px;color:#111111;">0.5</div>
<div class="t" style="left:963.00px;top:254.99px;font-size:12.3px;color:#111111;">0</div>
<div class="t" style="left:931.00px;top:263.99px;font-size:12.3px;color:#111111;">1</div>
<div class="t" style="left:1490.50px;top:238.99px;font-size:12.3px;color:#111111;">1</div>
<div class="t" style="left:1507.00px;top:251.49px;font-size:12.3px;color:#111111;">0</div>
<div class="t" style="left:1528.00px;top:246.49px;font-size:12.3px;color:#111111;">cm</div>
<div class="t" style="left:873.00px;top:307.49px;font-size:12.3px;color:#111111;">cm</div>
<div class="t" style="left:895.00px;top:327.49px;font-size:12.3px;color:#111111;">0.5</div>
<div class="t" style="left:876.00px;top:398.49px;font-size:12.3px;color:#111111;">0</div>
<div class="t" style="left:503.60px;top:573.22px;font-size:12.5px;color:#111111;">z</div>
<div class="t" style="left:505.40px;top:599.98px;font-size:11.6px;color:#111111;">y</div>
<svg class="a" style="left:0;top:0" width="1634" height="743" viewBox="0 0 1634 743"><circle cx="508.3" cy="612.3" r="2.6" fill="#55b04f"/><path d="M507.3 616.8V595" stroke="#4a80c2" stroke-width="1.6"/><path d="M507.3 588.8L510.3 596.8H504.3Z" fill="#4a80c2"/><path d="M508 616.4H530" stroke="#e0306a" stroke-width="1.7"/><path d="M538.2 616.3L528.7 613.2V619.6Z" fill="#e0306a"/></svg>
<div class="t" style="left:543.00px;top:609.22px;font-size:12.5px;color:#111111;">x</div>
<div class="t" style="left:476.00px;top:678.22px;font-size:12.5px;color:#3c4c96;">Messages</div>
<svg class="a" style="left:543px;top:680px;" width="10" height="9" viewBox="0 0 10 9"><path d="M0.8 0.8L8.8 8.2M8.8 0.8L0.8 8.2" stroke="#b0b0b0" stroke-width="1.1"/></svg>
<div class="t" style="left:582.00px;top:678.22px;font-size:12.5px;color:#4a4a4a;">Progress</div>
<div class="t" style="left:661.00px;top:678.22px;font-size:12.5px;color:#4a4a4a;">Log</div>
<div class="a" style="left:464px;top:699px;width:1175px;height:1px;background:#d4d4d4"></div>
<div class="a" style="left:472px;top:697px;width:87px;height:2px;background:#2a7ccc"></div>
<svg class="a" style="left:473px;top:702px;" width="13" height="18" viewBox="0 0 13 18"><path d="M1.2 1.2L3.8 7" stroke="#666" stroke-width="1.4" stroke-linecap="round"/><path d="M2.8 7Q4.5 5.8 5.8 7.2L10.8 14.6Q8.5 16.5 6.5 17Q3.3 13 2.8 7Z" fill="#f2ad55"/><path d="M4.5 9Q5.5 12 6.8 15" stroke="#fbd89c" stroke-width="1.4" fill="none"/></svg>
<div class="a" style="left:492px;top:701px;width:20px;height:20px;background:#cfe5f9;border:1px solid #a6d0f4;border-radius:3px"></div>
<svg class="a" style="left:494px;top:704px;" width="17" height="14" viewBox="0 0 17 14"><rect x="0.7" y="0.7" width="13" height="10" rx="1.2" fill="#fff" stroke="#2e86d2" stroke-width="1.2"/><path d="M0.7 2.6H13.7" stroke="#2e86d2" stroke-width="1"/><rect x="4.5" y="5.5" width="11.6" height="7.6" fill="#fff" stroke="#2e86d2" stroke-width="1.3"/><path d="M5.5 6.5L10.3 10.5L15.1 6.5" fill="none" stroke="#6f9fd6" stroke-width="0.9"/></svg>
<div class="a" style="left:468px;top:724px;width:1175px;height:30px;background:#f9fafe;border:1px solid #cdcdcd"></div>
<div class="t" style="left:471.00px;top:726.72px;font-size:12.5px;transform:scaleX(0.92);transform-origin:0 0;">COMSOL Multiphysics 6.3.0.290</div>
</body></html>
